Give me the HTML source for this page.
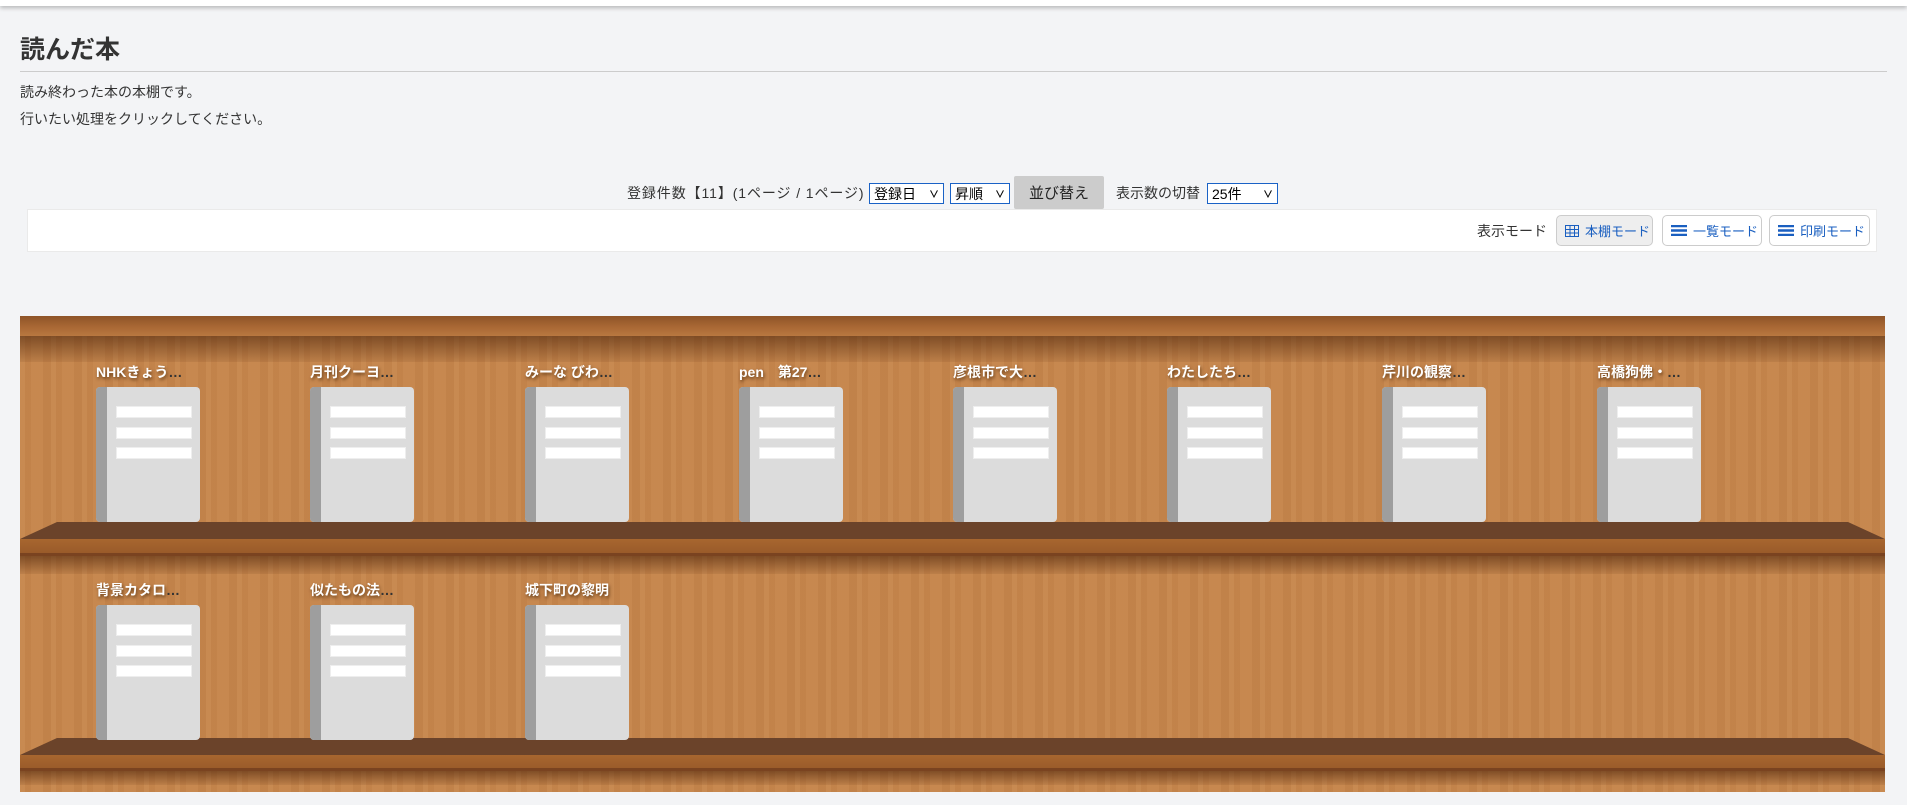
<!DOCTYPE html>
<html><head><meta charset="utf-8"><style>
*{margin:0;padding:0;box-sizing:border-box}
body{width:1907px;height:805px;background:#f3f4f6;font-family:"Liberation Sans","Noto Sans CJK JP",sans-serif;color:#333;position:relative;overflow:hidden}
.topbar{position:absolute;left:0;top:0;width:1907px;height:6px;background:#fff;box-shadow:0 2px 4px rgba(0,0,0,.25)}
h1{position:absolute;left:20px;top:30px;font-size:25px;font-weight:bold;color:#333}
.hr{position:absolute;left:20px;top:71px;width:1867px;height:1px;background:#ccc}
.p{position:absolute;left:20px;font-size:14px;color:#333}
.a{position:absolute;white-space:nowrap}
.sel{position:absolute;border:1px solid #1a62c6;background:#fff;height:21px;top:183px;font-size:14px;padding:0 4px;display:flex;align-items:center;justify-content:space-between;color:#000;white-space:nowrap}
.sel s{text-decoration:none;font-size:10px;font-weight:bold}
.btn{position:absolute;left:1014px;top:176px;background:#ccc;height:33px;width:90px;border-radius:2px;display:flex;align-items:center;justify-content:center;font-size:15px;color:#222}
.wbar{position:absolute;left:27px;top:209px;width:1850px;height:43px;background:#fff;border:1px solid #eaeaea}
.mb{position:absolute;top:215px;height:31px;border:1px solid #ccc;border-radius:5px;display:flex;align-items:center;padding:0 0 0 8px;color:#1a5fc0;gap:6px;background:#fff;white-space:nowrap;font-size:13px}
.mb.on{background:#eee}
.shelf{position:absolute;left:20px;top:316px;width:1865px;height:476px;overflow:hidden;
background:
repeating-linear-gradient(90deg,rgba(255,230,180,.05) 0 5px,rgba(120,60,20,.03) 5px 11px,rgba(255,220,160,.04) 11px 23px,rgba(100,50,10,.04) 23px 31px),
#c5854c}
.band{position:absolute;left:0;width:100%;background:linear-gradient(#8e5428,#a76633 50%,#b97840)}
.shadow{position:absolute;left:0;width:100%;background:linear-gradient(rgba(70,30,5,.55),rgba(90,45,15,.1))}
.board{position:absolute;left:0;width:100%;height:17px;background:#6b432a;clip-path:polygon(37px 0,calc(100% - 37px) 0,100% 100%,0 100%)}
.front{position:absolute;left:0;width:100%;height:14px;background:linear-gradient(#a8662f,#9a5b2a)}
.book{position:absolute;width:104px;height:135px;background:#dcdcdc;border-radius:4px;overflow:hidden}
.book:before{content:"";position:absolute;left:0;top:0;width:11px;height:100%;background:#9e9e9e}
.book i{position:absolute;left:20px;width:76px;height:12px;background:#fff;border:1px solid #eee}
.t{position:absolute;font-size:14px;font-weight:bold;color:#fff;text-shadow:1px 2px 3px rgba(60,30,0,.7);white-space:nowrap}
.t b{color:#333;text-shadow:none}
</style></head><body>
<div class="topbar"></div>
<h1>読んだ本</h1>
<div class="hr"></div>
<div class="p" style="top:82px">読み終わった本の本棚です。</div>
<div class="p" style="top:109px">行いたい処理をクリックしてください。</div>
<div class="a" style="left:627px;top:183px;font-size:14px;letter-spacing:.9px">登録件数【11】(1ページ / 1ページ)</div>
<div class="sel" style="left:869px;width:75px">登録日 <s>∨</s></div>
<div class="sel" style="left:950px;width:60px">昇順 <s>∨</s></div>
<div class="btn">並び替え</div>
<div class="a" style="left:1116px;top:183px;font-size:14px">表示数の切替</div>
<div class="sel" style="left:1207px;width:71px">25件 <s>∨</s></div>
<div class="wbar"></div>
<div class="a" style="left:1477px;top:221px;font-size:14px">表示モード</div>
<span class="mb on" style="left:1556px;width:97px"><svg width="14" height="12"><path d="M.5.5h13v11H.5zM.5 4.5h13M.5 8h13M5 .5v11M9.5.5v11" fill="none" stroke="#1a5fc0"/></svg>本棚モード</span>
<span class="mb" style="left:1662px;width:100px"><svg width="16" height="11"><path d="M0 1h16M0 5.5h16M0 10h16" stroke="#1a5fc0" stroke-width="2.5"/></svg>一覧モード</span>
<span class="mb" style="left:1769px;width:101px"><svg width="16" height="11"><path d="M0 1h16M0 5.5h16M0 10h16" stroke="#1a5fc0" stroke-width="2.5"/></svg>印刷モード</span>

<div class="shelf">
<div class="band" style="top:0;height:20px"></div>
<div class="shadow" style="top:20px;height:26px"></div>
<div class="board" style="top:206px"></div>
<div class="front" style="top:223px"></div>
<div class="band" style="top:237px;height:3px;background:#7a4320"></div>
<div class="shadow" style="top:240px;height:18px"></div>
<div class="board" style="top:422px"></div>
<div class="front" style="top:439px"></div>
<div class="band" style="top:452px;height:3px;background:#7a4320"></div>
<div class="shadow" style="top:455px;height:14px"></div>
</div>

<div class="t" style="left:96px;top:362px">NHKきょう<b>…</b></div>
<div class="t" style="left:310px;top:362px">月刊クーヨ<b>…</b></div>
<div class="t" style="left:525px;top:362px">みーな びわ<b>…</b></div>
<div class="t" style="left:739px;top:362px">pen　第27<b>…</b></div>
<div class="t" style="left:953px;top:362px">彦根市で大<b>…</b></div>
<div class="t" style="left:1167px;top:362px">わたしたち<b>…</b></div>
<div class="t" style="left:1382px;top:362px">芹川の観察<b>…</b></div>
<div class="t" style="left:1597px;top:362px">高橋狗佛・<b>…</b></div>
<div class="t" style="left:96px;top:580px">背景カタロ<b>…</b></div>
<div class="t" style="left:310px;top:580px">似たもの法<b>…</b></div>
<div class="t" style="left:525px;top:580px">城下町の黎明</div>

<div class="book" style="left:96px;top:387px"><i style="top:19px"></i><i style="top:40px"></i><i style="top:60px"></i></div>
<div class="book" style="left:310px;top:387px"><i style="top:19px"></i><i style="top:40px"></i><i style="top:60px"></i></div>
<div class="book" style="left:525px;top:387px"><i style="top:19px"></i><i style="top:40px"></i><i style="top:60px"></i></div>
<div class="book" style="left:739px;top:387px"><i style="top:19px"></i><i style="top:40px"></i><i style="top:60px"></i></div>
<div class="book" style="left:953px;top:387px"><i style="top:19px"></i><i style="top:40px"></i><i style="top:60px"></i></div>
<div class="book" style="left:1167px;top:387px"><i style="top:19px"></i><i style="top:40px"></i><i style="top:60px"></i></div>
<div class="book" style="left:1382px;top:387px"><i style="top:19px"></i><i style="top:40px"></i><i style="top:60px"></i></div>
<div class="book" style="left:1597px;top:387px"><i style="top:19px"></i><i style="top:40px"></i><i style="top:60px"></i></div>
<div class="book" style="left:96px;top:605px"><i style="top:19px"></i><i style="top:40px"></i><i style="top:60px"></i></div>
<div class="book" style="left:310px;top:605px"><i style="top:19px"></i><i style="top:40px"></i><i style="top:60px"></i></div>
<div class="book" style="left:525px;top:605px"><i style="top:19px"></i><i style="top:40px"></i><i style="top:60px"></i></div>
</body></html>
